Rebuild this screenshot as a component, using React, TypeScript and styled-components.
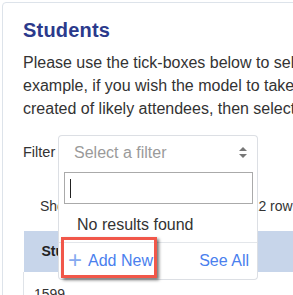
import React from "react";
import styled, { createGlobalStyle } from "styled-components";

const Global = createGlobalStyle`
  html, body { margin: 0; padding: 0; background: #ffffff; overflow: hidden; }
  body { font-family: "Liberation Sans", Arial, sans-serif; color: #333333; }
  * { box-sizing: border-box; }
`;

const Card = styled.section`
  margin: 2px 0 0 2px;
  width: 700px;
  min-height: 320px;
  border: 1px solid #dde3ea;
  border-radius: 4px;
  padding: 14px 20px 0 20px;
  background: #fff;
`;

const Heading = styled.h2`
  margin: 0;
  font-family: "Liberation Sans", Arial, sans-serif;
  font-weight: 700;
  font-size: 20px;
  letter-spacing: 0.2px;
  line-height: 26px;
  color: #2b3a8c;
`;

const Intro = styled.p`
  margin: 8px 0 0 0;
  font-size: 16px;
  line-height: 23px;
  white-space: nowrap;
`;

const FilterRow = styled.div`
  display: flex;
  align-items: center;
  margin-top: 15px;
`;

const Label = styled.span`
  width: 35px;
  font-size: 14.5px;
  line-height: 20px;
  white-space: nowrap;
`;

const SelectWrap = styled.div`
  position: relative;
  width: 200px;
`;

const SelectBox = styled.div`
  height: 34px;
  border: 1px solid #dcdfe4;
  border-bottom: none;
  border-radius: 4px 4px 0 0;
  display: flex;
  align-items: center;
  justify-content: space-between;
  padding: 0 10px 0 15px;
  font-size: 16px;
  color: #9a9a9a;
  background: #fff;
`;

const Arrows = styled.svg`
  width: 8px;
  height: 11px;
  display: block;
`;

const Dropdown = styled.div`
  position: absolute;
  top: 34px;
  left: 0;
  width: 200px;
  height: 111px;
  border: 1px solid #dcdfe4;
  border-top: none;
  border-radius: 0 0 4px 4px;
  background: #fff;
  display: flex;
  flex-direction: column;
  z-index: 2;
`;

const Search = styled.div`
  margin: 3px 4px 0 5px;
  height: 32px;
  border: 1px solid #aaaaaa;
  display: flex;
  align-items: center;
  padding-left: 5px;
`;

const Caret = styled.span`
  width: 1px;
  height: 19px;
  background: #222;
`;

const Empty = styled.div`
  padding: 3px 0 0 18px;
  height: 38px;
  display: flex;
  align-items: center;
  font-size: 16px;
  color: #333;
`;

const Footer = styled.div`
  position: relative;
  flex: 1;
  border-top: 1px solid #e3e6ea;
  display: flex;
  align-items: center;
  justify-content: space-between;
  padding: 0 8px 0 9px;
`;

const Action = styled.span`
  font-size: 16px;
  color: #4a80ee;
  display: flex;
  align-items: center;
  gap: 6px;
`;

const Plus = styled.span`
  font-size: 24px;
  font-weight: 300;
  color: #86aaf0;
  line-height: 1;
  margin-top: -2px;
`;

const Highlight = styled.div`
  position: absolute;
  left: 2px;
  top: -6px;
  width: 96px;
  height: 41px;
  border: 3px solid #f1574a;
  box-shadow: 2px 2px 3px rgba(0, 0, 0, 0.55);
  pointer-events: none;
`;

const Summary = styled.div`
  margin: 27px 0 0 17px;
  font-size: 14px;
  line-height: 20px;
  white-space: nowrap;
`;

const Table = styled.table`
  margin-top: 15px;
  border-collapse: collapse;
  width: 640px;
  font-size: 14px;
`;

const HeadCell = styled.th`
  background: #c7d5ea;
  text-align: left;
  font-weight: 700;
  height: 41px;
  padding: 0 0 2px 18px;
  color: #222;
`;

const Cell = styled.td`
  border-left: 1px solid #dfe3e8;
  padding: 12px 10px;
  line-height: 20px;
`;

export default function App() {
  return (
    <>
      <Global />
      <Card>
        <Heading>Students</Heading>
        <Intro>
          Please use the tick-boxes below to select the students you wish to include. For
          <br />
          example, if you wish the model to take account of a particular event, and have a list
          <br />
          created of likely attendees, then select them here.
        </Intro>
        <FilterRow>
          <Label>Filter</Label>
          <SelectWrap>
            <SelectBox>
              Select a filter
              <Arrows viewBox="0 0 8 11">
                <path d="M4 0 L8 4 L0 4 Z" fill="#777" />
                <path d="M0 7 L8 7 L4 11 Z" fill="#777" />
              </Arrows>
            </SelectBox>
            <Dropdown>
              <Search>
                <Caret />
              </Search>
              <Empty>No results found</Empty>
              <Footer>
                <Action>
                  <Plus>+</Plus>Add New
                </Action>
                <Action>See All</Action>
                <Highlight />
              </Footer>
            </Dropdown>
          </SelectWrap>
        </FilterRow>
        <Summary>Showing 1 to 100 rows out of 10,112 rows</Summary>
        <Table>
          <thead>
            <tr>
              <HeadCell>Student ID</HeadCell>
              <HeadCell>Name</HeadCell>
            </tr>
          </thead>
          <tbody>
            <tr>
              <Cell>1599</Cell>
              <Cell>Student</Cell>
            </tr>
          </tbody>
        </Table>
      </Card>
    </>
  );
}
